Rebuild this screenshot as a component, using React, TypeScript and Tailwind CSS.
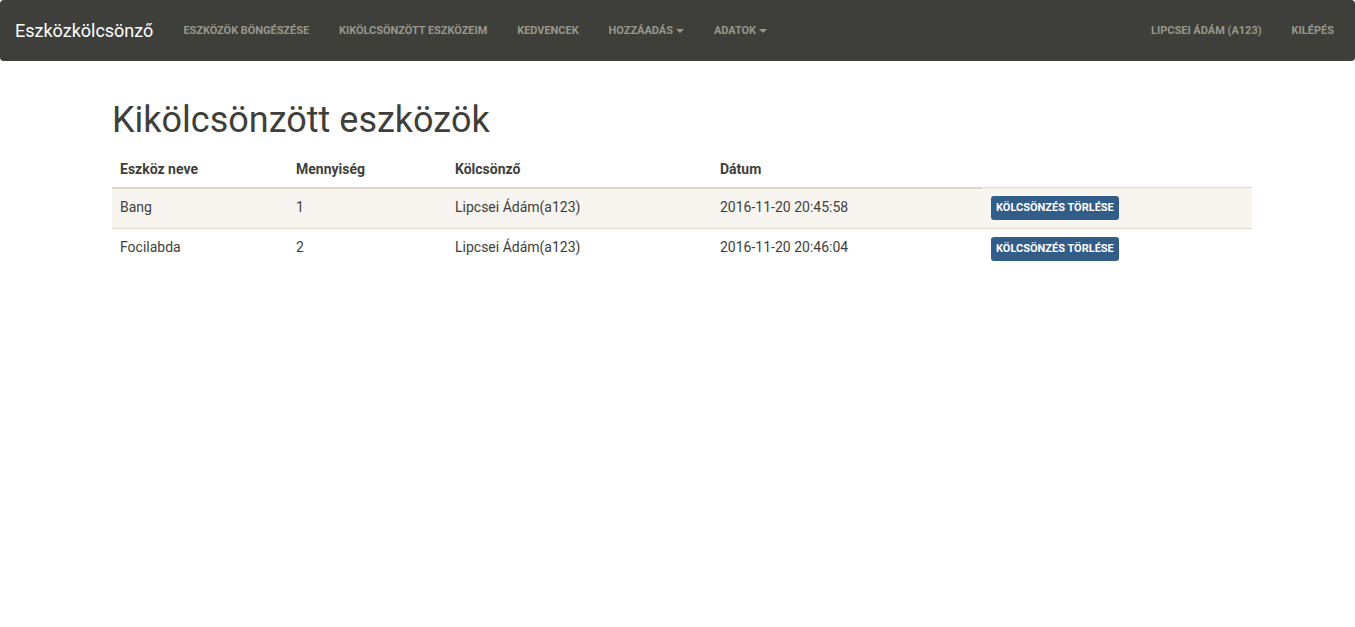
import React from "react"

const navLinks = [
  { label: "Eszközök böngészése" },
  { label: "Kikölcsönzött eszközeim" },
  { label: "Kedvencek" },
  { label: "Hozzáadás", caret: true },
  { label: "Adatok", caret: true },
]

const rows = [
  { name: "Bang", qty: "1", who: "Lipcsei Ádám(a123)", date: "2016-11-20 20:45:58" },
  { name: "Focilabda", qty: "2", who: "Lipcsei Ádám(a123)", date: "2016-11-20 20:46:04" },
]

function Caret() {
  return <span className="ml-[3px] inline-block h-0 w-0 border-x-[4px] border-t-[4px] border-x-transparent border-t-[#98978b] align-middle" />
}

export default function App() {
  return (
    <div className="min-h-screen bg-white text-[14px] text-[#3e3f3a]" style={{ fontFamily: "Roboto, 'Helvetica Neue', Arial, sans-serif" }}>
      {/* Navbar */}
      <nav className="flex h-[61px] items-center justify-between rounded-[4px] bg-[#3e3f3a] px-[15px]">
        <div className="flex items-center">
          <a className="pr-[15px] text-[18px] leading-[20px] text-white">Eszközkölcsönző</a>
          <ul className="flex items-center">
            {navLinks.map((l) => (
              <li key={l.label} className="px-[15px] text-[11px] font-bold uppercase leading-[20px] tracking-[-0.04px] text-[#98978b]">
                {l.label}
                {l.caret && <Caret />}
              </li>
            ))}
          </ul>
        </div>
        <ul className="flex items-center pr-[6px]">
          <li className="px-[15px] text-[11px] font-bold uppercase leading-[20px] text-[#98978b]">Lipcsei Ádám (a123)</li>
          <li className="pl-[15px] text-[11px] font-bold uppercase leading-[20px] text-[#98978b]">Kilépés</li>
        </ul>
      </nav>

      {/* Content */}
      <div className="pl-[112px] pt-[20px]">
        <div className="w-[1140px]">
          <h1 className="mb-[10px] mt-[20px] text-[36px] font-normal leading-[39.6px]">Kikölcsönzött eszközök</h1>
          <table className="w-full border-collapse text-left">
            <colgroup>
              <col className="w-[176px]" />
              <col className="w-[159px]" />
              <col className="w-[265px]" />
              <col className="w-[270px]" />
              <col className="w-[270px]" />
            </colgroup>
            <thead>
              <tr>
                <th className="border-b-2 border-[#dfd7ca] p-[8px] font-bold leading-[20px]">Eszköz neve</th>
                <th className="border-b-2 border-[#dfd7ca] p-[8px] font-bold leading-[20px]">Mennyiség</th>
                <th className="border-b-2 border-[#dfd7ca] p-[8px] font-bold leading-[20px]">Kölcsönző</th>
                <th className="border-b-2 border-[#dfd7ca] p-[8px] font-bold leading-[20px]">Dátum</th>
              </tr>
            </thead>
            <tbody>
              {rows.map((r, i) => (
                <tr key={r.name} className={i % 2 === 0 ? "bg-[#f8f5f0]" : ""}>
                  <td className="border-t border-[#dfd7ca] p-[8px] align-top leading-[20px]">{r.name}</td>
                  <td className="border-t border-[#dfd7ca] p-[8px] align-top leading-[20px]">{r.qty}</td>
                  <td className="border-t border-[#dfd7ca] p-[8px] align-top leading-[20px]">{r.who}</td>
                  <td className="border-t border-[#dfd7ca] p-[8px] align-top leading-[20px]">{r.date}</td>
                  <td className="border-t border-[#dfd7ca] p-[8px] align-top leading-[20px]">
                    <button className="ml-[1px] h-[24px] rounded-[3px] bg-[#325d88] px-[5px] text-[11px] font-bold uppercase leading-[24px] text-white">
                      Kölcsönzés törlése
                    </button>
                  </td>
                </tr>
              ))}
            </tbody>
          </table>
        </div>
      </div>
    </div>
  )
}
